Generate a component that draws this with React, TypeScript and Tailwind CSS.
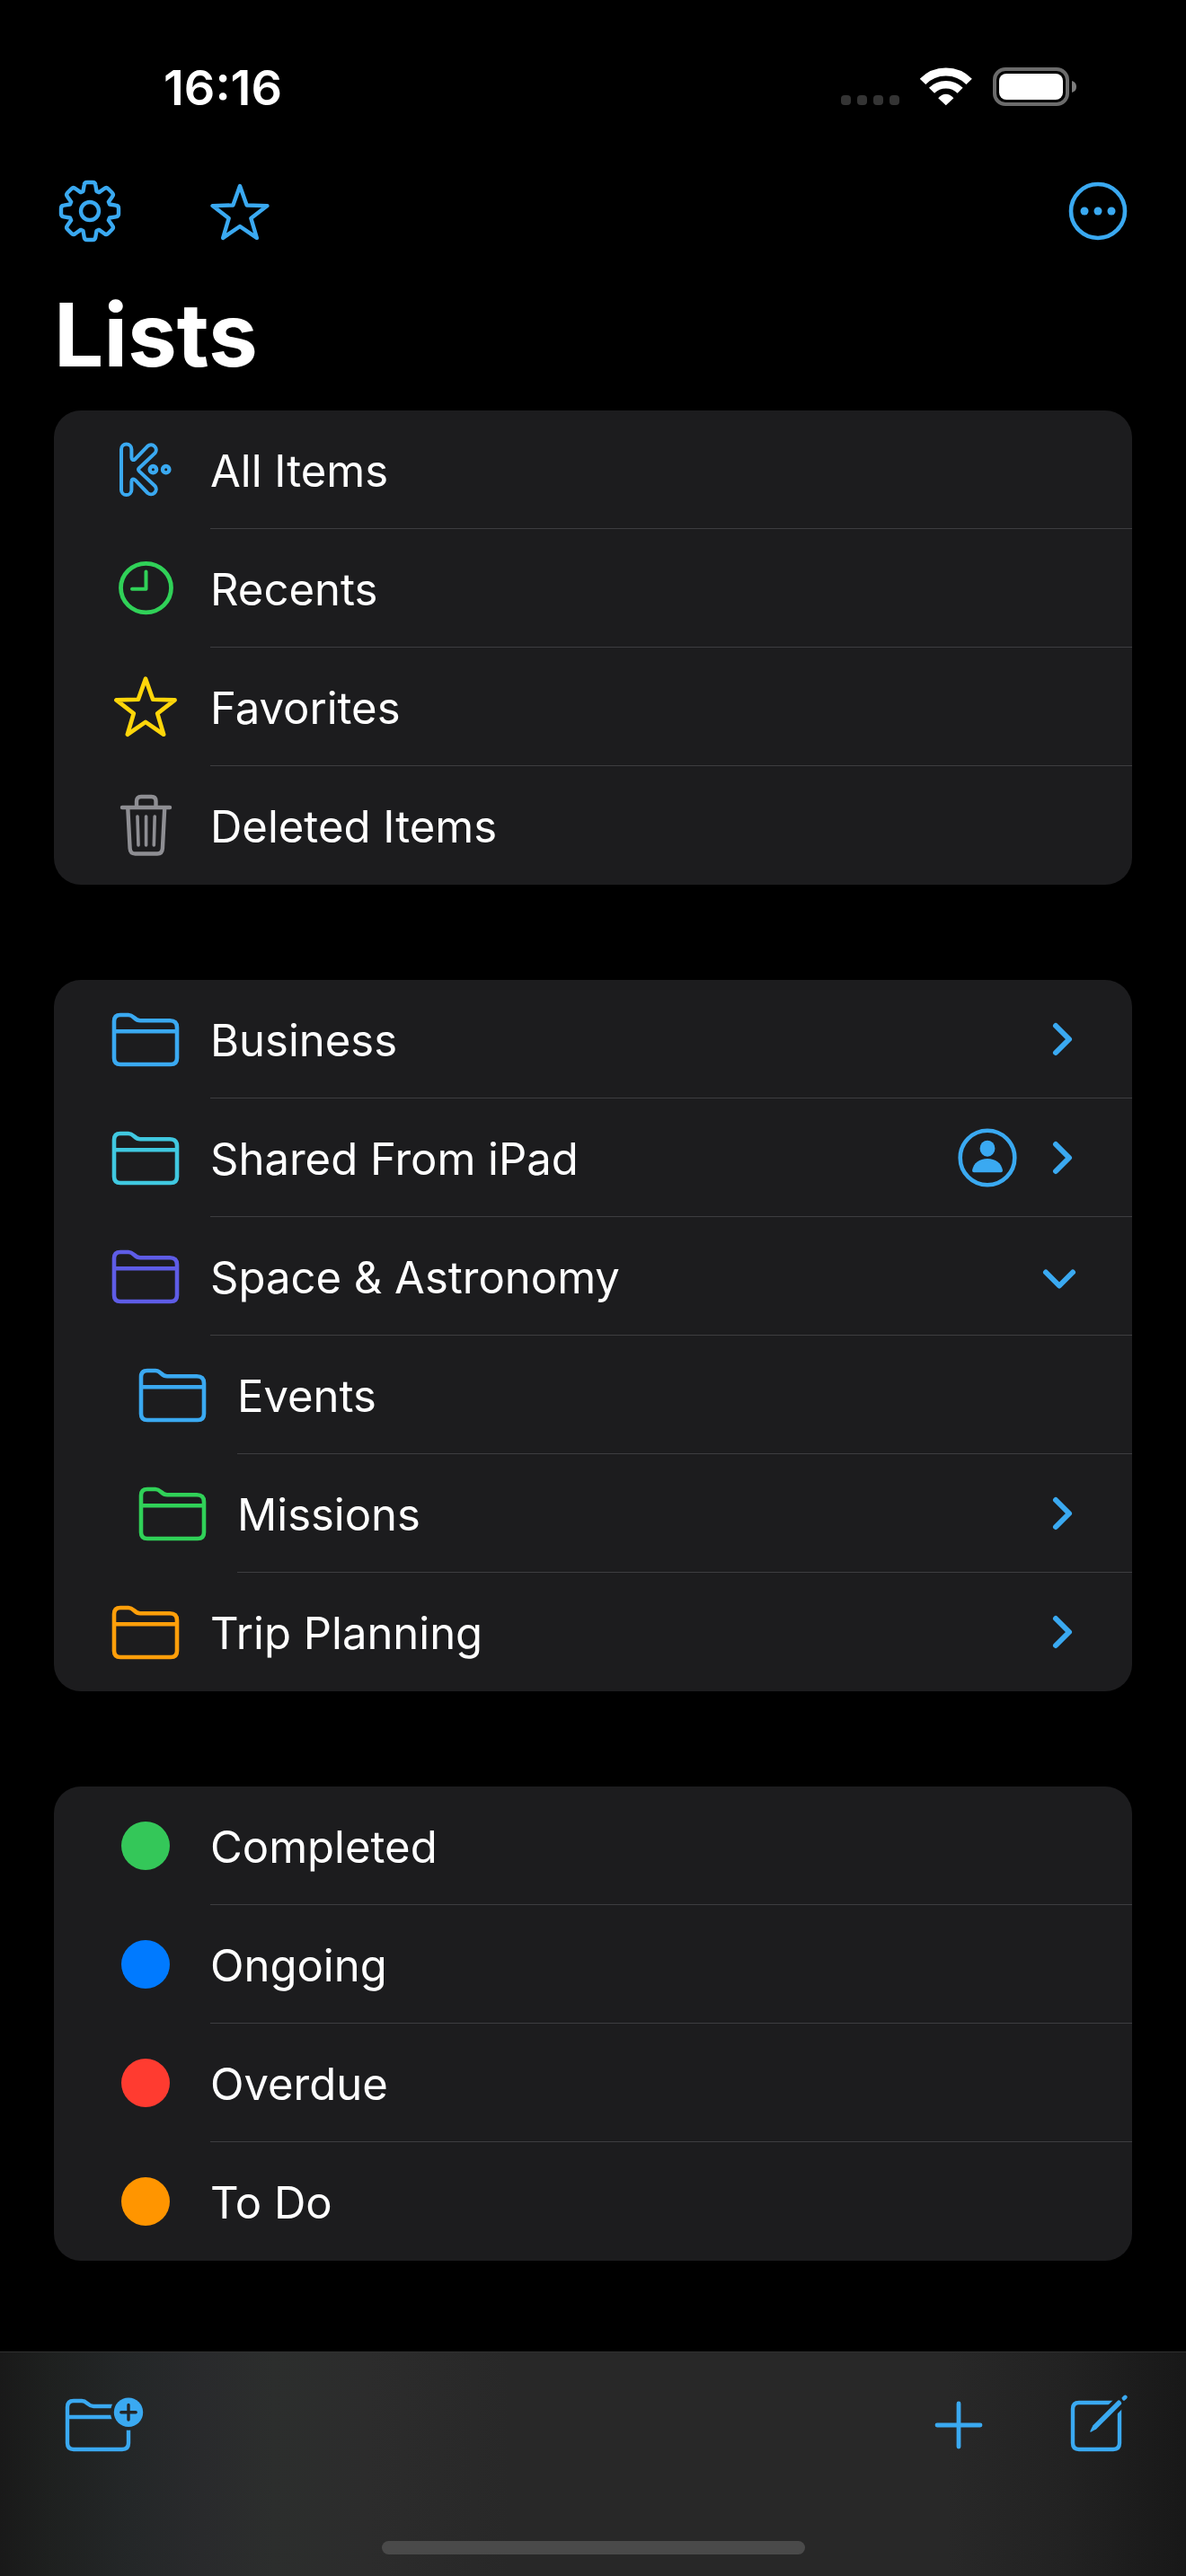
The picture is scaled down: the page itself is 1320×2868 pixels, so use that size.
import type { ReactNode } from "react";
import clsx from "clsx";

/* ---------- icons ---------- */

// One gear tooth, repeated every 45 degrees around the origin
const tooth: [number, number][] = [[-7.5, -22], [-6.3, -29], [-6, -32], [-3, -32], [3, -32], [6, -32], [6.3, -29], [7.5, -22]];

const gearPath = Array.from({ length: 8 }, (_, i) => {
  const a = (i * Math.PI) / 4;
  const p = tooth.map(([x, y]) => `${(x * Math.cos(a) - y * Math.sin(a)).toFixed(2)} ${(x * Math.sin(a) + y * Math.cos(a)).toFixed(2)}`);
  return `${i === 0 ? "M" : "L"}${p[0]}L${p[1]}Q${p[2]} ${p[3]}L${p[4]}Q${p[5]} ${p[6]}L${p[7]}`;
}).join("") + "Z";

const starPath = Array.from({ length: 10 }, (_, i) => {
  const r = i % 2 ? 13 : 32;
  const a = (i * Math.PI) / 5;
  return `${i ? "L" : "M"}${(r * Math.sin(a)).toFixed(2)} ${(-r * Math.cos(a)).toFixed(2)}`;
}).join("") + "Z";

function Icon({ children }: { children: ReactNode }) {
  return (
    <svg viewBox="0 0 80 80" className="w-20 h-20 shrink-0" fill="none" stroke="currentColor" strokeWidth="4.4" strokeLinecap="round" strokeLinejoin="round" aria-hidden="true">
      {children}
    </svg>
  );
}

const GearIcon = () => (
  <Icon>
    <path d={gearPath} transform="translate(40 40)" />
    <circle cx="40" cy="40" r="10" />
  </Icon>
);

const StarIcon = () => (
  <Icon><path d={starPath} transform="translate(40 44)" /></Icon>
);

const FavoriteIcon = () => (
  <Icon><path d={starPath} transform="translate(40 43) scale(1.07)" /></Icon>
);

const MoreIcon = () => (
  <Icon>
    <circle cx="40" cy="40" r="30" strokeWidth="4.6" />
    <g fill="currentColor" stroke="none">
      <circle cx="25" cy="40" r="4.5" />
      <circle cx="40" cy="40" r="4.5" />
      <circle cx="55" cy="40" r="4.5" />
    </g>
  </Icon>
);

const KeepIcon = () => (
  <Icon>
    <path strokeWidth="4" d="M13 17.3A5.7 5.7 0 0 1 24.4 17.3V26.5Q24.6 30.6 28.4 28.2L42.4 13.6A5.7 5.7 0 0 1 50.6 21.4L33 38Q31.2 39.8 33 41.6L50.6 58.2A5.7 5.7 0 0 1 42.4 66L28.4 51.4Q24.6 49 24.4 53.1V62.4A5.7 5.7 0 0 1 13 62.4Z" />
    <circle cx="48.4" cy="39.7" r="3.7" />
    <circle cx="62.7" cy="39.7" r="3.7" />
  </Icon>
);

const ClockIcon = () => (
  <Icon>
    <ellipse cx="40.5" cy="39.6" rx="28" ry="27.3" strokeWidth="4.8" />
    <path strokeWidth="4" d="M40.5 21.4V40.7H25" />
  </Icon>
);

const TrashIcon = () => (
  <Icon>
    <path d="M14 20H67M30 19V13Q30 8 35 8H46.5Q51.5 8 51.5 13V19M20.3 21L22.6 65.5Q23 71.5 28.5 71.5H53Q58.5 71.5 58.9 65.5L61.2 21" />
    <path strokeWidth="3.6" d="M31 30L32 62M40.6 30V62M50.2 30L49.3 62" />
  </Icon>
);

const FolderIcon = () => (
  <Icon>
    <path strokeWidth="4.6" d="M5 20Q5 13 12 13H21C27 13 27.5 19.3 34 19.3H67Q75 19.3 75 27V61Q75 68 68 68H12Q5 68 5 61ZM5 31.3H75" />
  </Icon>
);

const PersonIcon = () => (
  <svg viewBox="0 0 66 66" className="w-[66px] h-[66px]" aria-hidden="true">
    <circle cx="33" cy="33" r="30.3" fill="none" stroke="currentColor" strokeWidth="4.6" />
    <ellipse cx="33" cy="22.7" rx="8.4" ry="9" fill="currentColor" />
    <path fill="currentColor" d="M18 49.200Q16 49.200 16 47C17.500 39 24 34 33 34S48.500 39 50 47Q50 49.200 48 49.200Z" />
  </svg>
);

const Chevron = ({ open }: { open: boolean }) => (
  <svg viewBox="0 0 48 48" className="w-12 h-12" fill="none" stroke="currentColor" strokeWidth="6" strokeLinecap="round" strokeLinejoin="round" aria-hidden="true">
    <path d={open ? "M8 19.5L23 34.5L38 19.5" : "M19 9L34 24L19 39"} />
  </svg>
);

const FolderPlusIcon = () => (
  <svg viewBox="0 0 96 80" className="w-24 h-20" fill="none" stroke="currentColor" strokeWidth="4.4" strokeLinejoin="round" aria-hidden="true">
    <mask id="badge-cut" maskUnits="userSpaceOnUse" x="0" y="0" width="96" height="80">
      <rect width="96" height="80" fill="#fff" stroke="none" />
      <circle cx="73" cy="25.7" r="20" fill="#000" stroke="none" />
    </mask>
    <path mask="url(#badge-cut)" d="M5 20Q5 13 12 13H21C27 13 27.5 19 34 19H66Q73 19 73 26V60Q73 67 66 67H12Q5 67 5 60ZM5 31H73" />
    <circle cx="73" cy="25.7" r="16.2" fill="currentColor" stroke="none" />
    <path stroke="#232628" strokeWidth="3.4" strokeLinecap="round" d="M73 17.500V34M64.800 25.700H81.200" />
  </svg>
);

const PlusIcon = () => (
  <Icon><path strokeWidth="4.8" d="M40 16V64M16 40H64" /></Icon>
);

const ComposeIcon = () => (
  <Icon>
    <mask id="pencil-cut" maskUnits="userSpaceOnUse" x="0" y="0" width="80" height="80">
      <rect width="80" height="80" fill="#fff" stroke="none" />
      <path d="M30 48L78 0" stroke="#000" strokeWidth="14" strokeLinecap="butt" />
    </mask>
    <path mask="url(#pencil-cut)" d="M18 15H56Q63 15 63 22V60Q63 67 56 67H18Q11 67 11 60V22Q11 15 18 15Z" />
    <g fill="currentColor" stroke="none">
      <path d="M30.3 46.8L33.5 40.3L61.3 12.5Q62.8 12 64.2 13.4T65.2 16.4L37.4 44.2L31.2 47.8Q30 48 30.3 46.8Z" />
      <path d="M65.5 9.6L67.7 7.2Q69.3 5.8 71 7.2T71 10.5L68.5 12.7Q67.6 13.2 66.5 12T65.5 9.6Z" />
    </g>
  </Icon>
);

/* ---------- data ---------- */

type Row = {
  title: string;
  icon: ReactNode;
  color: string;
  nested?: boolean;
  shared?: boolean;
  expand?: "open" | "closed";
};

const dot = <span className="w-[54px] h-[54px] rounded-full bg-current" />;

const sections: { label: string; rows: Row[] }[] = [
  {
    label: "Library",
    rows: [
      { title: "All Items", icon: <KeepIcon />, color: "text-[#3aa9f1]" },
      { title: "Recents", icon: <ClockIcon />, color: "text-[#30d158]" },
      { title: "Favorites", icon: <FavoriteIcon />, color: "text-[#ffd60a]" },
      { title: "Deleted Items", icon: <TrashIcon />, color: "text-[#8e8e93]" },
    ],
  },
  {
    label: "Folders",
    rows: [
      { title: "Business", icon: <FolderIcon />, color: "text-[#3aa9f1]", expand: "closed" },
      { title: "Shared From iPad", icon: <FolderIcon />, color: "text-[#40c8e0]", shared: true, expand: "closed" },
      { title: "Space & Astronomy", icon: <FolderIcon />, color: "text-[#5e5ce6]", expand: "open" },
      { title: "Events", icon: <FolderIcon />, color: "text-[#3aa9f1]", nested: true },
      { title: "Missions", icon: <FolderIcon />, color: "text-[#30d158]", nested: true, expand: "closed" },
      { title: "Trip Planning", icon: <FolderIcon />, color: "text-[#ff9f0a]", expand: "closed" },
    ],
  },
  {
    label: "Labels",
    rows: [
      { title: "Completed", icon: dot, color: "text-[#34c759]" },
      { title: "Ongoing", icon: dot, color: "text-[#007aff]" },
      { title: "Overdue", icon: dot, color: "text-[#ff3b30]" },
      { title: "To Do", icon: dot, color: "text-[#ff9500]" },
    ],
  },
];

/* ---------- parts ---------- */

function StatusBar() {
  return (
    <div className="flex items-center justify-between pt-[66px] pl-[182px] pr-[122px]">
      <time className="text-[54px] leading-[64px] font-semibold">16:16</time>
      <div className="flex items-end gap-[23px] pb-[3px]">
        <div className="flex gap-[7px] pb-px">
          {[0, 1, 2, 3].map((i) => <span key={i} className="w-[11px] h-[11px] rounded bg-[#343434]" />)}
        </div>
        <svg viewBox="0 0 58 43" className="w-[58px] h-[43px]" fill="none" stroke="#fff" role="img" aria-label="Wi-Fi">
          <path strokeWidth="9" d="M3 15.800A36 36 0 0 1 54.600 15.800" />
          <path strokeWidth="8.6" d="M13 25.700A22.500 22.500 0 0 1 44.600 25.700" />
          <path fill="#fff" stroke="none" d="M28.800 42.200L20.200 34.200Q28.800 25.400 37.400 34.200Z" />
        </svg>
        <svg viewBox="0 0 93 43" className="w-[93px] h-[43px]" role="img" aria-label="Battery">
          <rect x="2" y="2" width="81" height="39" rx="12" fill="none" stroke="#6b6b6b" strokeWidth="4" />
          <rect x="7" y="7" width="71" height="29" rx="8" fill="#fff" />
          <path d="M88 15Q93 16.500 93 21.500T88 28Z" fill="#7d7d7d" />
        </svg>
      </div>
    </div>
  );
}

function ListRow({ row }: { row: Row }) {
  return (
    <li className={clsx("group flex h-[132px]", row.nested ? "pl-[92px]" : "pl-[62px]")}>
      <span className={clsx("flex w-20 mr-8 items-center justify-center", row.color)}>{row.icon}</span>
      <div className="flex flex-1 items-center pr-14 gap-6 border-b border-[#3d3d40] group-last:border-transparent">
        <button type="button" className="flex-1 self-stretch pt-1 text-left text-[49px] leading-[60px]">{row.title}</button>
        {row.shared && (
          <button type="button" aria-label="Sharing" className="text-[#3aa9f1]"><PersonIcon /></button>
        )}
        {row.expand && (
          <button type="button" aria-label={`Toggle ${row.title}`} aria-expanded={row.expand === "open"} className="text-[#3aa9f1]">
            <Chevron open={row.expand === "open"} />
          </button>
        )}
      </div>
    </li>
  );
}

export default function App() {
  return (
    <div className="flex min-h-screen flex-col bg-black font-['Inter','Liberation_Sans',sans-serif] text-white">
      <StatusBar />

      <header>
        <nav className="flex items-center justify-between pt-[65px] pl-[60px] pr-[58px] text-[#3aa9f1]">
          <div className="flex gap-[87px]">
            <button type="button" aria-label="Settings"><GearIcon /></button>
            <button type="button" aria-label="Favorites"><StarIcon /></button>
          </div>
          <button type="button" aria-label="More"><MoreIcon /></button>
        </nav>
        <h1 className="mt-[38px] px-[60px] text-[98px] leading-[120px] font-bold">Lists</h1>
      </header>

      <main className="flex flex-col gap-[106px] px-[60px] pt-6 pb-[101px]">
        {sections.map((s) => (
          <ul key={s.label} aria-label={s.label} className="overflow-hidden rounded-[30px] bg-[#1c1c1e]">
            {s.rows.map((r) => <ListRow key={r.title} row={r} />)}
          </ul>
        ))}
      </main>

      <footer className="mt-auto border-t border-[#303030] bg-[linear-gradient(90deg,#191919_0%,#1e201f_4%,#242728_11%,#292a2c_17%,#2c2e2d_23%,#2c2c2c_31%,#282828_43%,#282828_80%,#222222_90%,#181818_100%)] pt-[41px] pb-6 text-[#3aa9f1]">
        <div className="flex items-center justify-between pl-[70px] pr-[57px]">
          <button type="button" aria-label="New folder"><FolderPlusIcon /></button>
          <div className="flex gap-[76px]">
            <button type="button" aria-label="Add"><PlusIcon /></button>
            <button type="button" aria-label="Compose"><ComposeIcon /></button>
          </div>
        </div>
        <div className="mx-auto mt-[89px] h-[15px] w-[471px] rounded-full bg-[#4a4a4a]" />
      </footer>
    </div>
  );
}
